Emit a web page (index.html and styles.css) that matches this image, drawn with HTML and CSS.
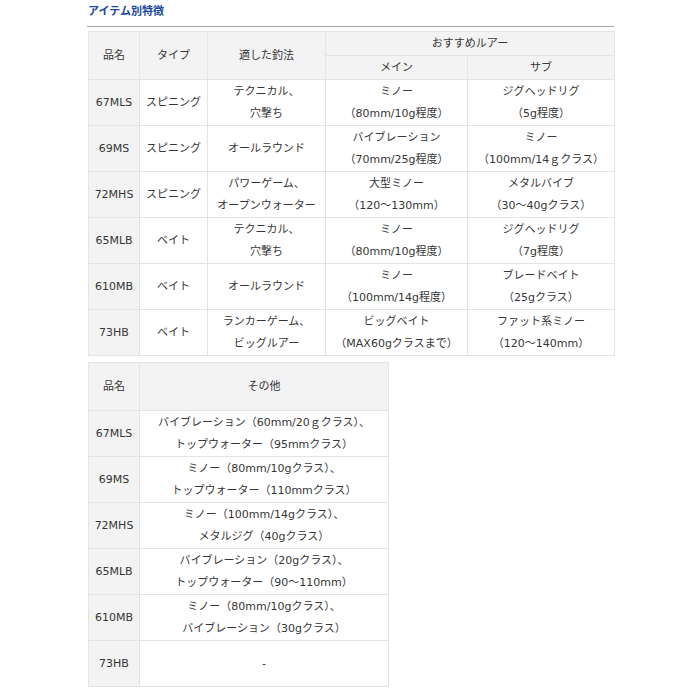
FILE: index.html
```html
<!DOCTYPE html>
<html lang="ja">
<head>
<meta charset="utf-8">
<link rel="stylesheet" href="styles.css">
</head>
<body>
<div class="page">
  <h2 class="title">アイテム別特徴</h2>
  <table class="spec spec-main">
    <colgroup>
      <col class="c-name"><col class="c-type"><col class="c-method"><col class="c-main"><col class="c-sub">
    </colgroup>
    <thead>
      <tr class="hr1">
        <th rowspan="2">品名</th>
        <th rowspan="2">タイプ</th>
        <th rowspan="2">適した釣法</th>
        <th colspan="2">おすすめルアー</th>
      </tr>
      <tr class="hr2">
        <th>メイン</th>
        <th>サブ</th>
      </tr>
    </thead>
    <tbody>
      <tr><th>67MLS</th><td>スピニング</td><td>テクニカル、<br>穴撃ち</td><td>ミノー<br>（80mm/10g程度）</td><td>ジグヘッドリグ<br>（5g程度）</td></tr>
      <tr><th>69MS</th><td>スピニング</td><td>オールラウンド</td><td>バイブレーション<br>（70mm/25g程度）</td><td>ミノー<br>（100mm/14ｇクラス）</td></tr>
      <tr><th>72MHS</th><td>スピニング</td><td>パワーゲーム、<br>オープンウォーター</td><td>大型ミノー<br>（120～130mm）</td><td>メタルバイブ<br>（30～40gクラス）</td></tr>
      <tr><th>65MLB</th><td>ベイト</td><td>テクニカル、<br>穴撃ち</td><td>ミノー<br>（80mm/10g程度）</td><td>ジグヘッドリグ<br>（7g程度）</td></tr>
      <tr><th>610MB</th><td>ベイト</td><td>オールラウンド</td><td>ミノー<br>（100mm/14g程度）</td><td>ブレードベイト<br>（25gクラス）</td></tr>
      <tr><th>73HB</th><td>ベイト</td><td>ランカーゲーム、<br>ビッグルアー</td><td>ビッグベイト<br>（MAX60gクラスまで）</td><td>ファット系ミノー<br>（120～140mm）</td></tr>
    </tbody>
  </table>
  <table class="spec spec-other">
    <colgroup>
      <col class="c-name"><col class="c-other">
    </colgroup>
    <thead>
      <tr class="hr-single"><th>品名</th><th>その他</th></tr>
    </thead>
    <tbody>
      <tr><th>67MLS</th><td>バイブレーション（60mm/20ｇクラス）、<br>トップウォーター（95mmクラス）</td></tr>
      <tr><th>69MS</th><td>ミノー（80mm/10gクラス）、<br>トップウォーター（110mmクラス）</td></tr>
      <tr><th>72MHS</th><td>ミノー（100mm/14gクラス）、<br>メタルジグ（40gクラス）</td></tr>
      <tr><th>65MLB</th><td>バイブレーション（20gクラス）、<br>トップウォーター（90～110mm）</td></tr>
      <tr><th>610MB</th><td>ミノー（80mm/10gクラス）、<br>バイブレーション（30gクラス）</td></tr>
      <tr><th>73HB</th><td>-</td></tr>
    </tbody>
  </table>
</div>
</body>
</html>
```

FILE: styles.css
```css
html, body {
  margin: 0;
  padding: 0;
  background: #ffffff;
}

.page {
  padding-left: 87px;
  font-family: "DejaVu Sans", "Noto Sans CJK JP", sans-serif;
  color: #363636;
  font-size: 11px;
}

.title {
  margin: 0 0 4px 0;
  width: 527px;
  height: 27px;
  line-height: 24px;
  font-size: 11px;
  font-weight: bold;
  color: #22489a;
  border-bottom: 1px solid #a8a8a8;
  box-sizing: border-box;
  padding-left: 1px;
}

.spec {
  border-collapse: collapse;
  table-layout: fixed;
  margin-left: 1px;
}

.spec-main {
  width: 526px;
}

.spec-other {
  width: 300px;
  margin-top: 6px;
}

.c-name { width: 51px; }
.c-type { width: 68px; }
.c-method { width: 118px; }
.c-main { width: 142px; }
.c-sub { width: 147px; }
.c-other { width: 249px; }

.spec th,
.spec td {
  border: 1px solid #e4e4e4;
  text-align: center;
  vertical-align: middle;
  padding: 0 2px;
  line-height: 22px;
  font-weight: normal;
  white-space: nowrap;
}

.spec th {
  background: #f3f3f3;
}

.spec td {
  background: #ffffff;
}

.hr1 { height: 24px; }
.hr2 { height: 24px; }
.hr-single { height: 48px; }

.spec tbody tr { height: 46px; }
```
